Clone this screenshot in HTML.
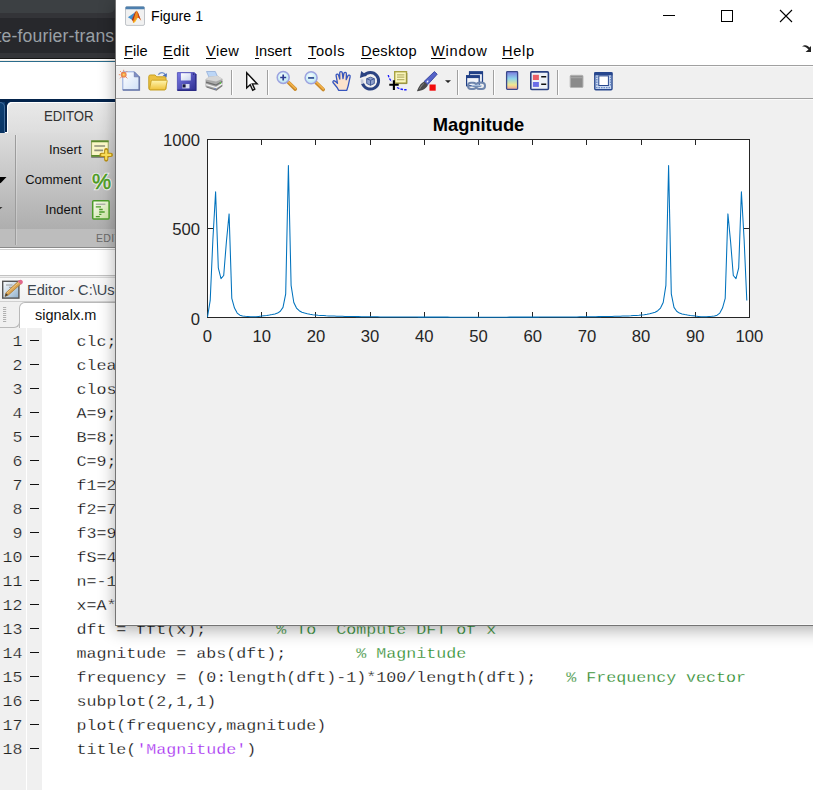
<!DOCTYPE html>
<html><head><meta charset="utf-8"><title>Figure 1</title>
<style>
html,body{margin:0;padding:0}
body{width:813px;height:790px;overflow:hidden;position:relative;background:#fff;font-family:"Liberation Sans",sans-serif}
.abs{position:absolute}
/* browser chrome */
#chrome{left:0;top:0;width:130px;height:58px;background:#333438;border-bottom:1.600px solid #161616;overflow:hidden}
#chromelt{left:0;top:59.600px;width:130px;height:1.200px;background:#f1ece6}
#chrome .pill{left:-10px;top:-10px;width:124.5px;height:23px;background:#3c4043;border-radius:0 0 6px 0}
#chrome .url{left:0;top:18px;width:130px;height:35px;background:#27282c}
#chrome .txt{left:-3.500px;top:25.500px;font-size:17.600px;line-height:20px;color:#9aa0a6;white-space:nowrap;letter-spacing:.15px}
#blueline{left:0;top:60.800px;width:130px;height:1.200px;background:#2b6c8c}
/* matlab toolstrip */
#navy{left:0;top:99px;width:130px;height:33px;background:linear-gradient(#04244c 0,#04244c 3px,#0d3d70 3px,#083262 100%)}
#navygap{left:5px;top:99px;width:3px;height:33px;background:#04244c}
#edtab{left:7px;top:101.5px;width:130px;height:32px;background:linear-gradient(#e9e9e9,#dddddd);border-radius:5px 0 0 0;box-shadow:inset 1px 1px 0 #fff}
#edtab span{position:absolute;left:37px;top:7.5px;font-size:13.200px;color:#333;transform:scaleY(1.1);transform-origin:0 50%}
#intab{left:-10px;top:101.500px;width:15px;height:31px;box-sizing:border-box;border:1px solid rgba(110,150,195,.55);border-bottom:none;border-radius:0 5px 0 0;background:linear-gradient(#0e3f72,#093463)}
#strip{left:0;top:133px;width:130px;height:96px;background:linear-gradient(#dcdcdc,#aeaeae)}
#striplab{left:0;top:228.500px;width:130px;height:18.500px;background:#bdbdbd}
#striplab span{position:absolute;left:96px;top:3px;font-size:10.5px;color:#6a6a6a;letter-spacing:.3px}
#stripline{left:0;top:246.600px;width:130px;height:1.100px;background:#8a8a8a}
#stripline2{left:0;top:248.500px;width:130px;height:1px;background:#d2d2d2}
.vsep{left:15px;top:135px;width:1px;height:110px;background:#9c9c9c;box-shadow:1px 0 0 rgba(255,255,255,.25)}
.tl{right:731.5px;font-size:13px;color:#111;white-space:nowrap}
/* editor */
#edline{left:0;top:274.700px;width:130px;height:3px;background:#ededed;border-top:1px solid #c2c2c2;border-bottom:1px solid #d6d6d6;box-sizing:border-box}
#edtitle{left:0;top:277.700px;width:130px;height:23.500px;background:linear-gradient(#fafafa,#f1f1f1)}
#edtitle span{position:absolute;left:27px;top:4.800px;line-height:17px;font-size:14.6px;color:#3d4650;white-space:nowrap}
#tabrow{left:0;top:301px;width:130px;height:27px;background:#f0f0f0;border-top:1px solid #d0d0d0;box-sizing:border-box}
#tab{left:19px;top:302px;width:130px;height:26px;background:#fff;border:1px solid #b9b9b9;border-bottom:none;border-radius:6px 0 0 0;box-sizing:border-box}
#tab span{position:absolute;left:15px;top:4px;font-size:14.5px;color:#111;white-space:nowrap}
#tabfoot{left:0;top:322px;width:20px;height:6px;border:1px solid #b9b9b9;border-left:none;border-top:none;border-radius:0 0 6px 0;box-sizing:border-box}
#gut1{left:0;top:328px;width:25.800px;height:470px;background:#f0f0f0}
#gut2{left:27.200px;top:328px;width:14.800px;height:470px;background:#f0f0f0}
.ln{position:absolute;left:0;height:24px;line-height:24px;width:813px;font-family:"Liberation Mono",monospace;font-size:16.67px;color:#000;white-space:pre}
.ln .num{position:absolute;right:790.500px;top:0;color:#222;-webkit-text-stroke:.25px #f0f0f0;transform:scaleY(.88);transform-origin:0 17.500px}
.ln .dash{position:absolute;left:30px;top:9.300px;width:9px;height:1.500px;background:#111}
.ln .code{position:absolute;left:76.400px;top:0;-webkit-text-stroke:.28px #fff;transform:scaleY(.92);transform-origin:0 17.500px}
.ln .cm{color:#1c831c}
.ln .str{color:#a020f0}
/* figure window */
#win{left:115px;top:-1px;width:720px;height:627px;background:#f0f0f0;border:1px solid #747474;box-sizing:border-box;box-shadow:0 4px 16px rgba(0,0,0,.32)}
#wtitle{left:0;top:0;width:100%;height:66px;background:#fff}
#wtitle .cap{left:35px;top:8px;font-size:14.2px;color:#000;white-space:nowrap}
.menu{top:42.5px;font-size:14.6px;color:#000;white-space:nowrap}
.menu u{text-decoration:underline;text-underline-offset:1.600px;text-decoration-thickness:1px}
#mline{left:0;top:65px;width:100%;height:1px;background:#a0a0a0}
#mline2{left:0;top:66px;width:100%;height:1px;background:#fafafa}
#tline{left:0;top:98px;width:100%;height:1px;background:#a0a0a0}
#tline2{left:0;top:99px;width:100%;height:1px;background:#fafafa}
.tsep{top:70px;width:1px;height:25px;background:#a0a0a0;box-shadow:1px 0 0 #fff}
svg{position:absolute;left:0;top:0;overflow:visible}
</style></head><body>

<div id="chrome" class="abs"><div class="pill abs"></div><div class="url abs"></div><div class="txt abs">te-fourier-trans</div></div>
<div id="chromelt" class="abs"></div><div id="blueline" class="abs"></div>

<div id="navy" class="abs"></div><div id="navygap" class="abs"></div><div id="intab" class="abs"></div>
<div id="edtab" class="abs"><span>EDITOR</span></div>
<div id="strip" class="abs"></div>
<div id="striplab" class="abs"><span>EDIT</span></div>
<div id="stripline" class="abs"></div><div id="stripline2" class="abs"></div>
<div class="vsep abs"></div>
<div class="tl abs" style="top:141.5px">Insert</div>
<div class="tl abs" style="top:171.5px">Comment</div>
<div class="tl abs" style="top:201.5px">Indent</div>

<div id="edline" class="abs"></div>
<div id="edtitle" class="abs"><span>Editor - C:\Users</span></div>
<div id="tabrow" class="abs"></div>
<div id="tab" class="abs"><span>signalx.m</span></div>
<div id="tabfoot" class="abs"></div>
<div id="gut1" class="abs"></div><div id="gut2" class="abs"></div>
<div class="ln" style="top:330.4px"><span class="num">1</span><span class="dash"></span><span class="code">clc;<span class="cm"></span></span></div>
<div class="ln" style="top:354.4px"><span class="num">2</span><span class="dash"></span><span class="code">clear all;<span class="cm"></span></span></div>
<div class="ln" style="top:378.4px"><span class="num">3</span><span class="dash"></span><span class="code">close all;<span class="cm"></span></span></div>
<div class="ln" style="top:402.4px"><span class="num">4</span><span class="dash"></span><span class="code">A=9;<span class="cm"></span></span></div>
<div class="ln" style="top:426.4px"><span class="num">5</span><span class="dash"></span><span class="code">B=8;<span class="cm"></span></span></div>
<div class="ln" style="top:450.4px"><span class="num">6</span><span class="dash"></span><span class="code">C=9;<span class="cm"></span></span></div>
<div class="ln" style="top:474.4px"><span class="num">7</span><span class="dash"></span><span class="code">f1=20;<span class="cm"></span></span></div>
<div class="ln" style="top:498.4px"><span class="num">8</span><span class="dash"></span><span class="code">f2=70;<span class="cm"></span></span></div>
<div class="ln" style="top:522.4px"><span class="num">9</span><span class="dash"></span><span class="code">f3=90;<span class="cm"></span></span></div>
<div class="ln" style="top:546.4px"><span class="num">10</span><span class="dash"></span><span class="code">fS=400;<span class="cm"></span></span></div>
<div class="ln" style="top:570.4px"><span class="num">11</span><span class="dash"></span><span class="code">n=-1:0.01:1;<span class="cm"></span></span></div>
<div class="ln" style="top:594.4px"><span class="num">12</span><span class="dash"></span><span class="code">x=A*sin(2*pi*f1*n/fS)+B*sin(2*pi*f2*n/fS)+C*sin(2*pi*f3*n/fS);<span class="cm"></span></span></div>
<div class="ln" style="top:618.4px"><span class="num">13</span><span class="dash"></span><span class="code">dft = fft(x);       <span class="cm">% To  Compute DFT of x</span></span></div>
<div class="ln" style="top:642.4px"><span class="num">14</span><span class="dash"></span><span class="code">magnitude = abs(dft);       <span class="cm">% Magnitude</span></span></div>
<div class="ln" style="top:666.4px"><span class="num">15</span><span class="dash"></span><span class="code">frequency = (0:length(dft)-1)*100/length(dft);   <span class="cm">% Frequency vector</span></span></div>
<div class="ln" style="top:690.4px"><span class="num">16</span><span class="dash"></span><span class="code">subplot(2,1,1)<span class="cm"></span></span></div>
<div class="ln" style="top:714.4px"><span class="num">17</span><span class="dash"></span><span class="code">plot(frequency,magnitude)<span class="cm"></span></span></div>
<div class="ln" style="top:738.4px"><span class="num">18</span><span class="dash"></span><span class="code">title(<span class=str>'Magnitude'</span>)<span class="cm"></span></span></div>

<div id="win" class="abs"></div>
<div class="abs" style="left:116px;top:0;width:697px;height:625px;overflow:hidden">
 <div id="wtitle" class="abs"><div class="cap abs">Figure 1</div>
  <div class="menu abs" style="left:8px"><u>F</u>ile</div>
  <div class="menu abs" style="left:47px;letter-spacing:.4px"><u>E</u>dit</div>
  <div class="menu abs" style="left:90px;letter-spacing:.5px"><u>V</u>iew</div>
  <div class="menu abs" style="left:139px"><u>I</u>nsert</div>
  <div class="menu abs" style="left:192px;letter-spacing:.6px"><u>T</u>ools</div>
  <div class="menu abs" style="left:245px;letter-spacing:.35px"><u>D</u>esktop</div>
  <div class="menu abs" style="left:315px;letter-spacing:.8px"><u>W</u>indow</div>
  <div class="menu abs" style="left:386px;letter-spacing:.7px"><u>H</u>elp</div>
 </div>
 <div id="mline" class="abs"></div><div id="mline2" class="abs"></div>
 <div class="abs" style="left:0;top:624px;width:100%;height:1px;background:#f8f8f8"></div><div id="tline" class="abs"></div><div id="tline2" class="abs"></div>
 <div class="tsep abs" style="left:115px"></div>
 <div class="tsep abs" style="left:151px"></div>
 <div class="tsep abs" style="left:341px"></div>
 <div class="tsep abs" style="left:377px"></div>
 <div class="tsep abs" style="left:441px"></div>
</div>

<svg id="ovl" width="813" height="790" viewBox="0 0 813 790">
 <!-- window controls -->
 <g stroke="#000" stroke-width="1" fill="none" shape-rendering="crispEdges">
  <path d="M663 15.5h12"/>
  <rect x="721.5" y="10.5" width="11" height="11"/>
 </g>
 <path d="M780 10l12 12M792 10l-12 12" stroke="#000" stroke-width="1.1" fill="none"/>
 <path d="M802 46.5c3-.5 5 1 6.5 3l-3 2.5h5.500v-6l-1.500 1.500c-1.500-2-4.500-3.500-7.500-1z" fill="#222"/>
 <!-- axes -->
 <rect x="207.500" y="139.500" width="542" height="178" fill="#fff" stroke="#262626" stroke-width="1"/>
 <g stroke="#262626" stroke-width="1" fill="none"><path d="M261.5 317.5v-5.5M261.5 139.5v5.5"/><path d="M315.5 317.5v-5.5M315.5 139.5v5.5"/><path d="M370.5 317.5v-5.5M370.5 139.5v5.5"/><path d="M424.5 317.5v-5.5M424.5 139.5v5.5"/><path d="M478.5 317.5v-5.5M478.5 139.5v5.5"/><path d="M532.5 317.5v-5.5M532.5 139.5v5.5"/><path d="M586.5 317.5v-5.5M586.5 139.5v5.5"/><path d="M641.5 317.5v-5.5M641.5 139.5v5.5"/><path d="M695.5 317.5v-5.5M695.5 139.5v5.5"/><path d="M207.5 228.5h5.5M749.5 228.5h-5.5"/></g>
 <polyline points="207.5,316.8 210.2,300.4 212.9,239.2 215.6,191.7 218.3,267.8 221.0,278.7 223.7,275.5 226.4,241.7 229.1,213.9 231.8,298.3 234.5,308.1 237.2,313.1 239.9,315.2 242.6,315.9 245.3,316.3 247.9,316.5 250.6,316.7 253.3,316.8 256.0,316.7 258.7,316.4 261.4,316.1 264.1,315.7 266.8,315.4 269.5,315.0 272.2,314.5 274.9,313.9 277.6,313.1 280.3,311.3 283.0,307.4 285.7,293.8 288.4,165.5 291.1,285.3 293.8,302.5 296.5,308.1 299.2,310.7 301.9,312.2 304.6,313.1 307.3,313.8 310.0,314.3 312.7,314.7 315.4,315.0 318.1,315.3 320.8,315.5 323.5,315.6 326.1,315.8 328.8,315.9 331.5,316.0 334.2,316.1 336.9,316.2 339.6,316.3 342.3,316.3 345.0,316.4 347.7,316.5 350.4,316.5 353.1,316.5 355.8,316.6 358.5,316.6 361.2,316.7 363.9,316.7 366.6,316.7 369.3,316.8 372.0,316.8 374.7,316.8 377.4,316.8 380.1,316.9 382.8,316.9 385.5,316.9 388.2,316.9 390.9,316.9 393.6,316.9 396.3,317.0 399.0,317.0 401.6,317.0 404.3,317.0 407.0,317.0 409.7,317.0 412.4,317.0 415.1,317.0 417.8,317.1 420.5,317.1 423.2,317.1 425.9,317.1 428.6,317.1 431.3,317.1 434.0,317.1 436.7,317.1 439.4,317.1 442.1,317.1 444.8,317.1 447.5,317.1 450.2,317.2 452.9,317.2 455.6,317.2 458.3,317.2 461.0,317.2 463.7,317.2 466.4,317.2 469.1,317.2 471.8,317.2 474.5,317.2 477.2,317.2 479.8,317.2 482.5,317.2 485.2,317.2 487.9,317.2 490.6,317.2 493.3,317.2 496.0,317.2 498.7,317.2 501.4,317.2 504.1,317.2 506.8,317.2 509.5,317.1 512.2,317.1 514.9,317.1 517.6,317.1 520.3,317.1 523.0,317.1 525.7,317.1 528.4,317.1 531.1,317.1 533.8,317.1 536.5,317.1 539.2,317.1 541.9,317.0 544.6,317.0 547.3,317.0 550.0,317.0 552.7,317.0 555.4,317.0 558.0,317.0 560.7,317.0 563.4,316.9 566.1,316.9 568.8,316.9 571.5,316.9 574.2,316.9 576.9,316.9 579.6,316.8 582.3,316.8 585.0,316.8 587.7,316.8 590.4,316.7 593.1,316.7 595.8,316.7 598.5,316.6 601.2,316.6 603.9,316.5 606.6,316.5 609.3,316.5 612.0,316.4 614.7,316.3 617.4,316.3 620.1,316.2 622.8,316.1 625.5,316.0 628.2,315.9 630.9,315.8 633.5,315.6 636.2,315.5 638.9,315.3 641.6,315.0 644.3,314.7 647.0,314.3 649.7,313.8 652.4,313.1 655.1,312.2 657.8,310.7 660.5,308.1 663.2,302.5 665.9,285.3 668.6,165.5 671.3,293.8 674.0,307.4 676.7,311.3 679.4,313.1 682.1,313.9 684.8,314.5 687.5,315.0 690.2,315.4 692.9,315.7 695.6,316.1 698.3,316.4 701.0,316.7 703.7,316.8 706.4,316.7 709.1,316.5 711.7,316.3 714.4,315.9 717.1,315.2 719.8,313.1 722.5,308.1 725.2,298.3 727.9,213.9 730.6,241.7 733.3,275.5 736.0,278.7 738.7,267.8 741.4,191.7 744.1,239.2 746.8,300.4" fill="none" stroke="#0072bd" stroke-width="1.050" stroke-linejoin="round"/>
 <g font-family="Liberation Sans, sans-serif" font-size="16.67" fill="#262626"><text x="207.5" y="342" text-anchor="middle">0</text><text x="261.7" y="342" text-anchor="middle">10</text><text x="315.9" y="342" text-anchor="middle">20</text><text x="370.1" y="342" text-anchor="middle">30</text><text x="424.3" y="342" text-anchor="middle">40</text><text x="478.5" y="342" text-anchor="middle">50</text><text x="532.7" y="342" text-anchor="middle">60</text><text x="586.9" y="342" text-anchor="middle">70</text><text x="641.1" y="342" text-anchor="middle">80</text><text x="695.3" y="342" text-anchor="middle">90</text><text x="749.5" y="342" text-anchor="middle">100</text>
  <text x="200" y="146" text-anchor="end">1000</text>
  <text x="200" y="235" text-anchor="end">500</text>
  <text x="200" y="324.500" text-anchor="end">0</text>
 </g>
 <text x="478.500" y="131.300" text-anchor="middle" font-family="Liberation Sans, sans-serif" font-weight="bold" font-size="18.330" fill="#000">Magnitude</text>
</svg>
<svg id="icons" width="813" height="790" viewBox="0 0 813 790">
<defs>
 <linearGradient id="gPage" x1="0" y1="0" x2="1" y2="1"><stop offset="0" stop-color="#ffffff"/><stop offset="1" stop-color="#cfe0f7"/></linearGradient>
 <linearGradient id="gFold" x1="0" y1="0" x2="0" y2="1"><stop offset="0" stop-color="#fff6b0"/><stop offset="1" stop-color="#efc23a"/></linearGradient>
 <linearGradient id="gSave" x1="0" y1="0" x2="1" y2="1"><stop offset="0" stop-color="#7a7ae6"/><stop offset="1" stop-color="#2e2e92"/></linearGradient>
 <linearGradient id="gLabel" x1="0" y1="0" x2="1" y2="1"><stop offset="0" stop-color="#ffffff"/><stop offset="1" stop-color="#c9d3ee"/></linearGradient>
 <radialGradient id="gLens" cx=".45" cy=".4" r=".7"><stop offset="0" stop-color="#ffffff"/><stop offset=".6" stop-color="#c9eef5"/><stop offset="1" stop-color="#b4c4ee"/></radialGradient>
 <linearGradient id="gCbar" x1="0" y1="0" x2="0" y2="1"><stop offset="0" stop-color="#7a7ae0"/><stop offset=".4" stop-color="#8fd6ea"/><stop offset=".75" stop-color="#f2e78e"/><stop offset="1" stop-color="#f09a9a"/></linearGradient>
 <linearGradient id="gPen" x1="0" y1="0" x2="1" y2="1"><stop offset="0" stop-color="#ffffff"/><stop offset="1" stop-color="#8fb0cc"/></linearGradient>
 <linearGradient id="gInd" x1="0" y1="0" x2="1" y2="1"><stop offset="0" stop-color="#fbfdf2"/><stop offset="1" stop-color="#c4dd9c"/></linearGradient>
 <radialGradient id="gSun"><stop offset="0" stop-color="#ffe95a"/><stop offset=".45" stop-color="#f59a3a"/><stop offset="1" stop-color="#e4643a"/></radialGradient>
</defs>

<!-- matlab logo in title bar -->
<g>
 <rect x="125.500" y="6.800" width="19" height="18.600" rx="1.500" fill="#f1f1f1" stroke="#bfc3c8" stroke-width="1"/>
 <path d="M125.500 7.500q0-1 1-1h17q1 0 1 1v1.800h-19z" fill="#4d7fae"/>
 <path d="M127.900 17.300l6.900-4.800-2.400 7.600z" fill="#3f8fd0"/>
 <path d="M131.800 19.800l3-7.300c.8-1.200 1.400-1.700 1.900-1.700l-1.200 5.500-2 5.800z" fill="#a5301c"/>
 <path d="M136.700 10.800c1.200.4 2.700 6.500 4.600 9.900-1.600-1.600-2.300-2.900-3-2.900-1.300 0-2.500 3.600-4.700 5.100l-.9-.9c1.600-3.500 2.800-10.900 4-11.200z" fill="#f08a1c"/>
 <path d="M137.200 11.300c1.100 1 2.500 6.300 4.100 9.400-1.400-1.500-2.200-2.900-3-2.900z" fill="#c8401e"/>
 <path d="M133.100 22.400c1.800-1.200 2.700-3.800 3.900-4.500l-1.100 3.100-2.200 1.900z" fill="#f7c32a"/>
</g>

<!-- New -->
<g>
 <path d="M122.800 71.800h11.500l5 5v13.200h-16.500z" fill="url(#gPage)" stroke="#8fa6da" stroke-width="1"/>
 <path d="M139.300 76.800v13.200h-16.500" fill="none" stroke="#6b79a8" stroke-width="1.600"/>
 <path d="M134.300 71.800l5 5h-5z" fill="#7f8fc8" stroke="#6b79a8" stroke-width=".8"/>
 <circle cx="123.700" cy="74.700" r="2.900" fill="url(#gSun)" opacity=".9"/>
 <g stroke="#ea8258" stroke-width="1" stroke-linecap="round" opacity=".85"><path d="M120.300 71.300l.8.800M127.100 71.300l-.8.800M120.300 78.100l.8-.8M127.100 78.100l-.8-.8M123.700 70.200v.6M119.200 74.700h.6"/></g>
</g>

<!-- Open -->
<g>
 <path d="M158.300 74.600c2.200-2.600 5.400-2.600 7.200.2" fill="none" stroke="#6f8fca" stroke-width="1.400"/>
 <path d="M167 73.200l-.4 4.400-3.900-2.200z" fill="#4a6eb6"/>
 <path d="M148.800 76.500q0-1.500 1.500-1.500h4.800l1.700 1.800h7.700q1.500 0 1.500 1.500v10.200q0 1.300-1.300 1.300h-14.600q-1.300 0-1.300-1.300z" fill="#ecc040" stroke="#c7a022" stroke-width="1"/>
 <path d="M152.300 80.200h14.200q.9 0 .7.900l-1.700 7.800q-.2.900-1.100.9h-14.200q-.9 0-.7-.9l1.700-7.800q.2-.9 1.100-.9z" fill="url(#gFold)" stroke="#c9a224" stroke-width=".9"/>
</g>

<!-- Save -->
<g>
 <path d="M177.400 72.600h17l1.400 1.400v16.200h-18.400z" fill="url(#gSave)" stroke="#4a4ab4" stroke-width=".8"/>
 <path d="M195.800 74v16.200h-18.400" fill="none" stroke="#2b2b86" stroke-width="1.400"/>
 <rect x="180.900" y="73.200" width="9.900" height="7.300" fill="url(#gLabel)"/>
 <rect x="182.300" y="84" width="7.200" height="4.400" fill="#d8dcf2"/>
 <rect x="182.600" y="84.300" width="3" height="3.200" fill="#15153a"/>
 <rect x="193" y="73.500" width="1.200" height="1.200" fill="#23236e"/>
</g>

<!-- Print -->
<g>
 <path d="M206.500 71.500h8.800l2.400 5.500-8 1.800z" fill="#bcd6f6" stroke="#8aa6d4" stroke-width=".7"/>
 <path d="M205.500 79.500l3.500-2.800 8.500-1 5 3.200v6.300l-6.200 4.800-10.800-3.200z" fill="#a9a9a9"/>
 <path d="M205.500 79.500l3.500-2.800 8.500-1 5 3.200-6.500 2.600z" fill="#d6d6d6"/>
 <path d="M206 82.200l10 2.800 6.300-3.600" fill="none" stroke="#6e6e6e" stroke-width="1.200"/>
 <path d="M206.200 84.600l10 3 6-3.700" fill="none" stroke="#f2f2f2" stroke-width="1.400"/>
 <path d="M206.500 87l9.800 3 6-4.400" fill="none" stroke="#7a7a7a" stroke-width="1.200"/>
 <rect x="219.800" y="82" width="1.200" height="2" fill="#5fc04a"/>
 <rect x="214.400" y="88.300" width="1.400" height="1" fill="#5a7ad8"/>
</g>

<!-- pointer -->
<path d="M246.700 72.800v15.200l3.500-3.300 2.500 5.500 2.100-1-2.500-5.300h4.900z" fill="#fff" stroke="#111" stroke-width="1.400" stroke-linejoin="miter"/>

<!-- zoom in -->
<g>
 <path d="M288.300 82.300l7 6.800" stroke="#c98a2a" stroke-width="3.600" stroke-linecap="round"/>
 <path d="M288.600 81.900l6.800 6.600" stroke="#f4b24a" stroke-width="1.600" stroke-linecap="round"/>
 <circle cx="283.200" cy="77.400" r="6" fill="url(#gLens)" stroke="#9da3e0" stroke-width="1.500"/>
 <path d="M280.200 77.500h6M283.200 74.500v6" stroke="#2b3c92" stroke-width="1.700"/>
</g>
<!-- zoom out -->
<g>
 <path d="M316.200 82.700l7 6.800" stroke="#c98a2a" stroke-width="3.600" stroke-linecap="round"/>
 <path d="M316.500 82.300l6.800 6.600" stroke="#f4b24a" stroke-width="1.600" stroke-linecap="round"/>
 <circle cx="311.100" cy="77.800" r="6" fill="url(#gLens)" stroke="#9da3e0" stroke-width="1.500"/>
 <path d="M308.100 77.900h6" stroke="#3b5a9a" stroke-width="1.900"/>
</g>

<!-- hand -->
<path d="M338.600 90.300c-1.200-3-3.500-5.400-5.400-7.500-1-1.300.3-2.600 1.700-1.700l2.600 2.200-1.400-7.600c-.3-1.700 1.900-2.200 2.400-.6l1.300 4-.1-6.200c0-1.700 2.400-1.800 2.600-.1l.7 5.900.9-5.300c.3-1.600 2.500-1.400 2.500.3l-.2 6 1.600-3.700c.7-1.500 2.700-.8 2.300.8-1 4-1.300 8.500-3.300 13.500z" fill="#fbe2cc" stroke="#3656be" stroke-width="1.300" stroke-linejoin="round"/>

<!-- rotate 3d -->
<g>
 <path d="M363.900 75.500a8.300 8.300 0 1 1-1.400 8.100" fill="none" stroke="#2b4382" stroke-width="3"/>
 <path d="M362.500 83.600c-.4-1.400-.5-2.800-.4-4.200" fill="none" stroke="#c3c9da" stroke-width="2.600"/>
 <path d="M359.900 78l1.300-7 5.600 4.600z" fill="#2b4382"/>
 <path d="M366.700 78.700l3.800-1.500 3.800 1.500v4.800l-3.800 1.800-3.800-1.800z" fill="#8ea0cc" stroke="#38508e" stroke-width=".9"/>
 <path d="M366.700 78.700l3.800 1.600 3.800-1.600M370.500 80.300v5" fill="none" stroke="#38508e" stroke-width=".9"/>
</g>

<!-- data cursor -->
<g>
 <rect x="394.700" y="71.700" width="11.800" height="11.400" fill="#faf6bc" stroke="#a9a241" stroke-width="1.400"/>
 <path d="M406.900 73v10.600h-11" fill="none" stroke="#8f8a3a" stroke-width=".8"/>
 <path d="M397 74.800h7.400M397 77.200h7.400M397 79.600h7.400" stroke="#b9b46a" stroke-width="1.200"/>
 <path d="M388.300 75c.4 2.600 1.600 4.800 3.600 6.500" fill="none" stroke="#1a1aff" stroke-width="1.400" stroke-dasharray="2.400 1.300"/>
 <path d="M397 87.500c2.800 1.600 6 2.300 9.600 2.300" fill="none" stroke="#1a1aff" stroke-width="1.400" stroke-dasharray="2.600 1.200"/>
 <path d="M389.300 84.800h9.400M393.900 80.300v9.600" stroke="#000" stroke-width="2.100"/>
</g>

<!-- brush -->
<g>
 <path d="M434.400 71.600l2.800 2.600-9.600 10.600-3.600-3.200z" fill="#5563c8" stroke="#36449c" stroke-width=".9"/>
 <path d="M428.300 80.700l-1.500 1.600" stroke="#fff" stroke-width="1.200"/>
 <path d="M424.100 81.500l3.700 3.400c-1.100 3.200-5.200 5.800-10.900 6.300 1.500-3.300 3-7.600 7.200-9.700z" fill="#4a4a4a"/>
 <path d="M423.800 83.600c-1.900 1.300-3.100 3.300-4.100 5.300" stroke="#8c8c8c" stroke-width="1" fill="none"/>
 <rect x="429.500" y="84.500" width="6.200" height="6.200" fill="#f20d0d"/>
 <path d="M445 80.200h6l-3 2.800z" fill="#222"/>
</g>

<!-- link plot -->
<g>
 <rect x="469.500" y="71.900" width="13" height="10.500" fill="#e8edf5" stroke="#1f3f86" stroke-width="1.200"/>
 <rect x="469" y="71.400" width="14" height="2.800" fill="#1f3f86"/>
 <rect x="466.600" y="75.800" width="12.600" height="10" fill="#f1f4f9" stroke="#1f3f86" stroke-width="1.200"/>
 <rect x="466" y="75.300" width="13.800" height="2.800" fill="#1f3f86"/>
 <rect x="468" y="82.800" width="8.200" height="6.200" rx="3" fill="none" stroke="#6f86ad" stroke-width="2"/>
 <rect x="476.200" y="82.800" width="8.800" height="6.200" rx="3" fill="none" stroke="#6f86ad" stroke-width="2"/>
 <path d="M472.500 85.900h8.200" stroke="#a9c0de" stroke-width="2.200" stroke-linecap="round"/>
 <path d="M472.500 86.600h8.200" stroke="#5f789f" stroke-width=".8"/>
</g>

<!-- colorbar -->
<rect x="506.600" y="71.700" width="11" height="17.600" rx=".8" fill="url(#gCbar)" stroke="#39488a" stroke-width="1.300"/>
<!-- legend -->
<g>
 <rect x="530.800" y="71.900" width="17.600" height="17.600" rx="1" fill="#eef2f7" stroke="#2a4182" stroke-width="1.600"/>
 <rect x="532.900" y="74.800" width="6" height="5.200" fill="#ea5f66"/>
 <rect x="532.900" y="82" width="6" height="4.900" fill="#6a6ee8"/>
 <path d="M541.200 76.800h5M541.200 84.200h5" stroke="#111" stroke-width="1.600"/>
</g>
<!-- hide plot tools (gray) -->
<g>
 <rect x="570.200" y="75.300" width="12.800" height="12.200" rx="1" fill="#8b8b8b" stroke="#b5b5b5" stroke-width="1"/>
 <path d="M571 77.500h11.400" stroke="#a2a2a2" stroke-width="1.600"/>
</g>
<!-- show plot tools -->
<g>
 <rect x="594.800" y="72.800" width="17.200" height="17" rx="1" fill="#c9d8f0" stroke="#27478e" stroke-width="1.400"/>
 <rect x="594.300" y="72.300" width="18.200" height="3" fill="#27478e"/>
 <rect x="598.800" y="75.900" width="9.600" height="9.600" fill="#fff" stroke="#27478e" stroke-width="1"/>
 <path d="M596.800 76.500v9M610.500 76.500v9" stroke="#6d8cc6" stroke-width="1.400" stroke-dasharray="1.500 1"/>
 <path d="M596 87.600h15" stroke="#6d8cc6" stroke-width="1.400" stroke-dasharray="1.500 1"/>
</g>

<!-- editor toolstrip icons -->
<g>
 <rect x="91.600" y="140.800" width="16.600" height="15.600" fill="#faf6c6" stroke="#8d9a55" stroke-width=".9"/>
 <path d="M91.200 141.300h17.400M91.200 155.900h17.400" stroke="#5b8a2e" stroke-width="1.800"/>
 <path d="M91.200 157.400h17.400" stroke="#7c7c7c" stroke-width="1"/>
 <path d="M94.300 146h10.800M94.300 150.400h8.800" stroke="#8f8f7a" stroke-width="1.700"/>
 <path d="M106.200 150.200v9.400M101.500 154.900h9.400" stroke="#b48c14" stroke-width="4.200" stroke-linecap="round"/>
 <path d="M106.200 150.800v8.200M102.100 154.900h8.200" stroke="#f7dc57" stroke-width="2.200" stroke-linecap="round"/>
</g>
<g font-family="Liberation Sans, sans-serif">
 <text x="92" y="189.300" font-size="21.500" fill="#ffffff" stroke="#f2f2f2" stroke-width="2.600" opacity=".8">%</text>
 <text x="92" y="188.600" font-size="21.500" fill="#4a9a1e" stroke="#4a9a1e" stroke-width=".5">%</text>
</g>
<g>
 <rect x="92.700" y="200.800" width="16.400" height="18.200" rx="1" fill="url(#gInd)" stroke="#4b9a2a" stroke-width="1.500"/>
 <path d="M95.800 204.200h9.600" stroke="#9a9a9a" stroke-width="1.100"/>
 <path d="M95.800 206.900h5.200M99.200 209.500h3.500M99.200 212h5.500M99.200 214.400h2.200M95.800 216.600h4" stroke="#4b9a2a" stroke-width="1.300"/>
</g>
<!-- left arrows -->
<path d="M-5.500 177h12l-6 6.200z" fill="#000"/>
<path d="M-4.500 207h7l-3.500 3.200z" fill="#333"/>

<!-- editor pencil icon -->
<g>
 <rect x="2.700" y="281.300" width="16.200" height="16.800" fill="url(#gPen)" stroke="#555" stroke-width="1.400"/>
 <path d="M6 285h6.500M9 287.300h3" stroke="#9a9a9a" stroke-width="1"/>
 <path d="M18.300 281.300l2.800 2.400-12.600 11.200-3.500 1.600 1-3.700z" fill="#d9a452" stroke="#a8742c" stroke-width=".7"/>
 <path d="M19.200 282.100l-12.300 11" stroke="#efc57e" stroke-width="1" fill="none"/>
 <path d="M5 296.500l.9-3.200 2.200 1.800z" fill="#3a3a3a"/>
 <path d="M17.800 281.600c1-1.800 2.800-2.500 4.200-1.400 1.400 1.100 1.200 3-.8 4.200z" fill="#e0668c"/>
</g>
<!-- grip -->
<path d="M3 307.500h3.200M3 309.500h3.200M3 311.500h3.200M3 313.500h3.200M3 315.500h3.200M3 317.500h3.200M3 319.500h3.200M3 321.500h3.200" stroke="#b0b0b0" stroke-width="1"/>
</svg>

</body></html>
